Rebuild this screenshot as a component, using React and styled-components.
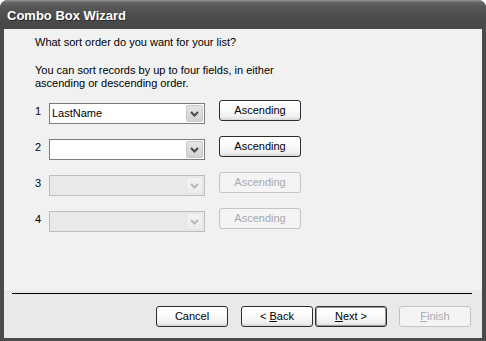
import React from "react";
import styled, { createGlobalStyle, css } from "styled-components";

const Global = createGlobalStyle`
  html, body { margin: 0; padding: 0; background: #ffffff; }
  body { font-family: "Liberation Sans", Arial, sans-serif; }
`;

const Window = styled.div`
  width: 486px;
  height: 341px;
  display: flex;
  flex-direction: column;
  background: #4b4b4b;
  border-radius: 8px 8px 0 0;
  overflow: hidden;
  box-sizing: border-box;
`;

const TitleBar = styled.div`
  flex: none;
  height: 29px;
  display: flex;
  align-items: center;
  padding-left: 7px;
  padding-top: 1px;
  box-sizing: border-box;
  background: linear-gradient(#9a9a9a 0, #6a6a6a 2px, #585858 6px, #4d4d4d 16px, #484848 24px, #4a4a4a 29px);
  color: #ffffff;
  font: bold 13px "Liberation Sans", Arial, sans-serif;
  text-shadow: 1px 1px 0 #2a2a2a;
`;

const Frame = styled.div`
  flex: 1;
  display: flex;
  flex-direction: column;
  padding: 0 4px 3px 4px;
  min-height: 0;
`;

const Client = styled.div`
  flex: 1;
  display: flex;
  flex-direction: column;
  background: #f1f1f1;
`;

const Main = styled.div`
  flex: 1;
  padding: 7px 0 0 31px;
  font-size: 11px;
  line-height: 13px;
  color: #000;
`;

const Para = styled.p`
  margin: ${(p) => (p.$first ? "0" : "15px 0 0")};
`;

const Rows = styled.div`
  margin-top: 10px;
  display: flex;
  flex-direction: column;
  gap: 12px;
`;

const Row = styled.div`
  display: flex;
  align-items: flex-start;
  height: 24px;
`;

const Num = styled.span`
  width: 14px;
  margin-top: 5px;
  font-size: 11px;
  line-height: 13px;
`;

const dotted = css`
  background-color: #e9e9e9;
  background-image: repeating-conic-gradient(#e4e4e4 0 25%, #eeeeee 0 50%);
  background-size: 2px 2px;
`;

const Combo = styled.div`
  margin-top: 3px;
  width: 156px;
  height: 21px;
  box-sizing: border-box;
  border: 1px solid ${(p) => (p.$disabled ? "#bdbdbd" : "#7c7c7c")};
  ${(p) => (p.$disabled ? dotted : "background: #ffffff;")}
  display: flex;
  align-items: center;
  padding: 1px;
`;

const ComboText = styled.span`
  flex: 1;
  padding-left: 1px;
  font-size: 11px;
  line-height: 13px;
  white-space: nowrap;
`;

const DropBtn = styled.span`
  width: 17px;
  height: 17px;
  box-sizing: border-box;
  border-radius: 2px;
  display: flex;
  align-items: center;
  justify-content: center;
  background: ${(p) =>
    p.$disabled
      ? "linear-gradient(#f2f2f2, #ececec)"
      : "linear-gradient(#e6e6e6, #d2d2d2)"};
  border: 1px solid ${(p) => (p.$disabled ? "#e4e4e4" : "#c8c8c8")};
`;

const Button = styled.button`
  box-sizing: border-box;
  width: ${(p) => p.$w || 72}px;
  height: 21px;
  margin: 0;
  padding: 0;
  border-radius: 3px;
  border: 1px solid ${(p) => (p.disabled ? "#c4c4c4" : "#2e2e2e")};
  background: ${(p) =>
    p.disabled
      ? "#f4f4f4"
      : "linear-gradient(#ffffff 0, #fafafa 50%, #eeeeee 85%, #d6d6d6 100%)"};
  color: ${(p) => (p.disabled ? "#a9a9a9" : "#000000")};
  font: 11px "Liberation Sans", Arial, sans-serif;
  line-height: 13px;
  box-shadow: ${(p) => (p.$default ? "inset 0 0 0 1px #9a9a9a" : "none")};
  cursor: default;
`;

const SortButton = styled(Button)`
  margin-left: 14px;
  width: 82px;
`;

const Footer = styled.div`
  flex: none;
  height: 48px;
  ${dotted}
  display: flex;
  flex-direction: column;
`;

const Separator = styled.div`
  height: 1px;
  background: #000000;
  margin: 3px 10px 0 8px;
`;

const ButtonBar = styled.div`
  margin-top: 12px;
  display: flex;
  justify-content: flex-end;
  padding-right: 11px;
`;

const Spacer = styled.span`
  width: ${(p) => p.$w}px;
  flex: none;
`;

const Chevron = ({ disabled }) => (
  <svg width="9" height="6" viewBox="0 0 9 6">
    <path
      d="M1 1 L4.5 4.5 L8 1"
      fill="none"
      stroke={disabled ? "#b8b8b8" : "#4a4a4a"}
      strokeWidth="2"
    />
  </svg>
);

const rows = [
  { n: 1, value: "LastName", disabled: false },
  { n: 2, value: "", disabled: false },
  { n: 3, value: "", disabled: true },
  { n: 4, value: "", disabled: true },
];

export default function App() {
  return (
    <>
      <Global />
      <Window>
        <TitleBar>Combo Box Wizard</TitleBar>
        <Frame>
          <Client>
            <Main>
              <Para $first>What sort order do you want for your list?</Para>
              <Para>
                You can sort records by up to four fields, in either
                <br />
                ascending or descending order.
              </Para>
              <Rows>
                {rows.map((r) => (
                  <Row key={r.n}>
                    <Num>{r.n}</Num>
                    <Combo $disabled={r.disabled}>
                      <ComboText>{r.value}</ComboText>
                      <DropBtn $disabled={r.disabled}>
                        <Chevron disabled={r.disabled} />
                      </DropBtn>
                    </Combo>
                    <SortButton disabled={r.disabled}>Ascending</SortButton>
                  </Row>
                ))}
              </Rows>
            </Main>
            <Footer>
              <Separator />
              <ButtonBar>
                <Button>Cancel</Button>
                <Spacer $w={13} />
                <Button>
                  &lt; <u>B</u>ack
                </Button>
                <Spacer $w={2} />
                <Button $default>
                  <u>N</u>ext &gt;
                </Button>
                <Spacer $w={12} />
                <Button disabled>
                  <u>F</u>inish
                </Button>
              </ButtonBar>
            </Footer>
          </Client>
        </Frame>
      </Window>
    </>
  );
}
